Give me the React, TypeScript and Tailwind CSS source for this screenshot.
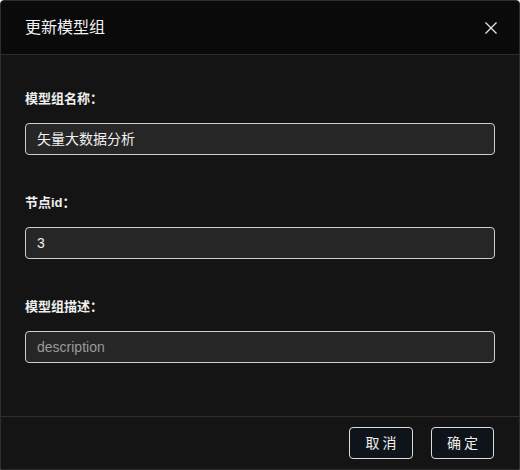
export default function App() {
  const fields = [
    { label: "模型组名称：", value: "矢量大数据分析", placeholder: false },
    { label: "节点id：", value: "3", placeholder: false },
    { label: "模型组描述：", value: "description", placeholder: true },
  ];

  return (
    <div
      className="w-[520px] h-[470px] bg-[#141414] border border-[#2e2e2e] rounded-t-[4px] flex flex-col overflow-hidden text-white"
      style={{ fontFamily: '"Liberation Sans", "Noto Sans CJK SC", sans-serif' }}
    >
      {/* header */}
      <div className="h-[54px] shrink-0 bg-[#0a0a0a] border-b border-[#2e2e2e] flex items-center justify-between pl-6 pr-[22px]">
        <span className="text-[16px] text-[#f2f2f2]">更新模型组</span>
        <svg width="12" height="12" viewBox="0 0 12 12" className="text-[#e6e6e6]">
          <path d="M0.5 0.5 L11.5 11.5 M11.5 0.5 L0.5 11.5" stroke="currentColor" strokeWidth="1.3" />
        </svg>
      </div>

      {/* body */}
      <div className="flex-1 flex flex-col gap-[40px] px-6 pt-[36px]">
        {fields.map((f) => (
          <div key={f.label} className="flex flex-col">
            <label className="h-4 leading-4 text-[13px] font-bold text-[#f0f0f0] mb-4">{f.label}</label>
            <div className="h-8 rounded-[4px] border border-[#cfcfcf] bg-[#262626] flex items-center px-[11px] text-[14px]">
              <span className={f.placeholder ? "text-[#9a9a9a]" : "text-[#f0f0f0]"}>{f.value}</span>
            </div>
          </div>
        ))}
      </div>

      {/* footer */}
      <div className="h-[53px] shrink-0 border-t border-[#2e2e2e] flex items-center justify-end gap-[18px] pr-[25px]">
        <button className="w-[64px] h-8 rounded-[4px] border border-[#dcdcdc] bg-[#0f141a] text-[14px] tracking-[3px] pl-[3px] text-[#f0f0f0]">
          取消
        </button>
        <button className="w-[63px] h-8 rounded-[4px] border border-[#dcdcdc] bg-[#0f141a] text-[14px] tracking-[3px] pl-[3px] text-[#f0f0f0]">
          确定
        </button>
      </div>
    </div>
  );
}
